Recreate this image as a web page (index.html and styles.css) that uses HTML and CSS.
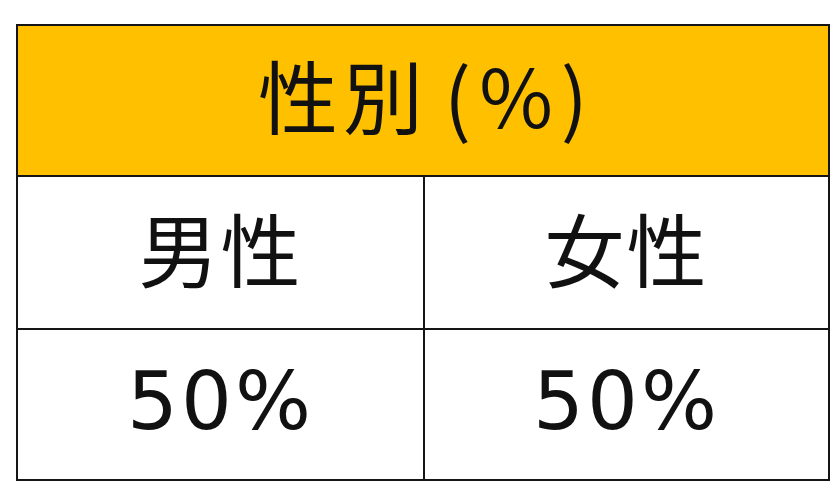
FILE: index.html
```html
<!DOCTYPE html>
<html lang="ja">
<head>
<meta charset="utf-8">
<link rel="stylesheet" href="styles.css">
</head>
<body>
<div class="sheet">
  <div class="cell head">性別<span class="paren">(%)</span></div>
  <div class="cell label">男性</div>
  <div class="cell label right">女性</div>
  <div class="cell value">50%</div>
  <div class="cell value right">50%</div>
</div>
</body>
</html>
```
FILE: styles.css
```css
html, body {
  margin: 0;
  padding: 0;
  background: #ffffff;
}
body {
  width: 840px;
  height: 489px;
  overflow: hidden;
}
.sheet {
  box-sizing: border-box;
  margin: 24px 0 0 16px;
  width: 814px;
  border: 2px solid #151515;
  display: grid;
  grid-template-columns: 405px 405px;
  grid-template-rows: 151px 153px 149px;
}
.cell {
  display: flex;
  align-items: center;
  justify-content: center;
  color: #111111;
  font-family: "Noto Sans CJK JP", "Noto Sans", sans-serif;
  font-size: 80px;
  line-height: 1;
  padding-bottom: 14px;
  box-sizing: border-box;
}
.head {
  grid-column: 1 / 3;
  background: #ffc000;
  border-bottom: 2px solid #151515;
  letter-spacing: 5px;
  padding-bottom: 16px;
}
.paren {
  margin-left: 16px;
  letter-spacing: 8px;
  margin-right: -8px;
}
.label {
  border-bottom: 2px solid #151515;
  letter-spacing: 2px;
}
.right {
  border-left: 2px solid #151515;
}
.value {
  font-family: "DejaVu Sans", sans-serif;
  font-size: 80px;
  letter-spacing: 3px;
  padding-bottom: 6px;
}
```
